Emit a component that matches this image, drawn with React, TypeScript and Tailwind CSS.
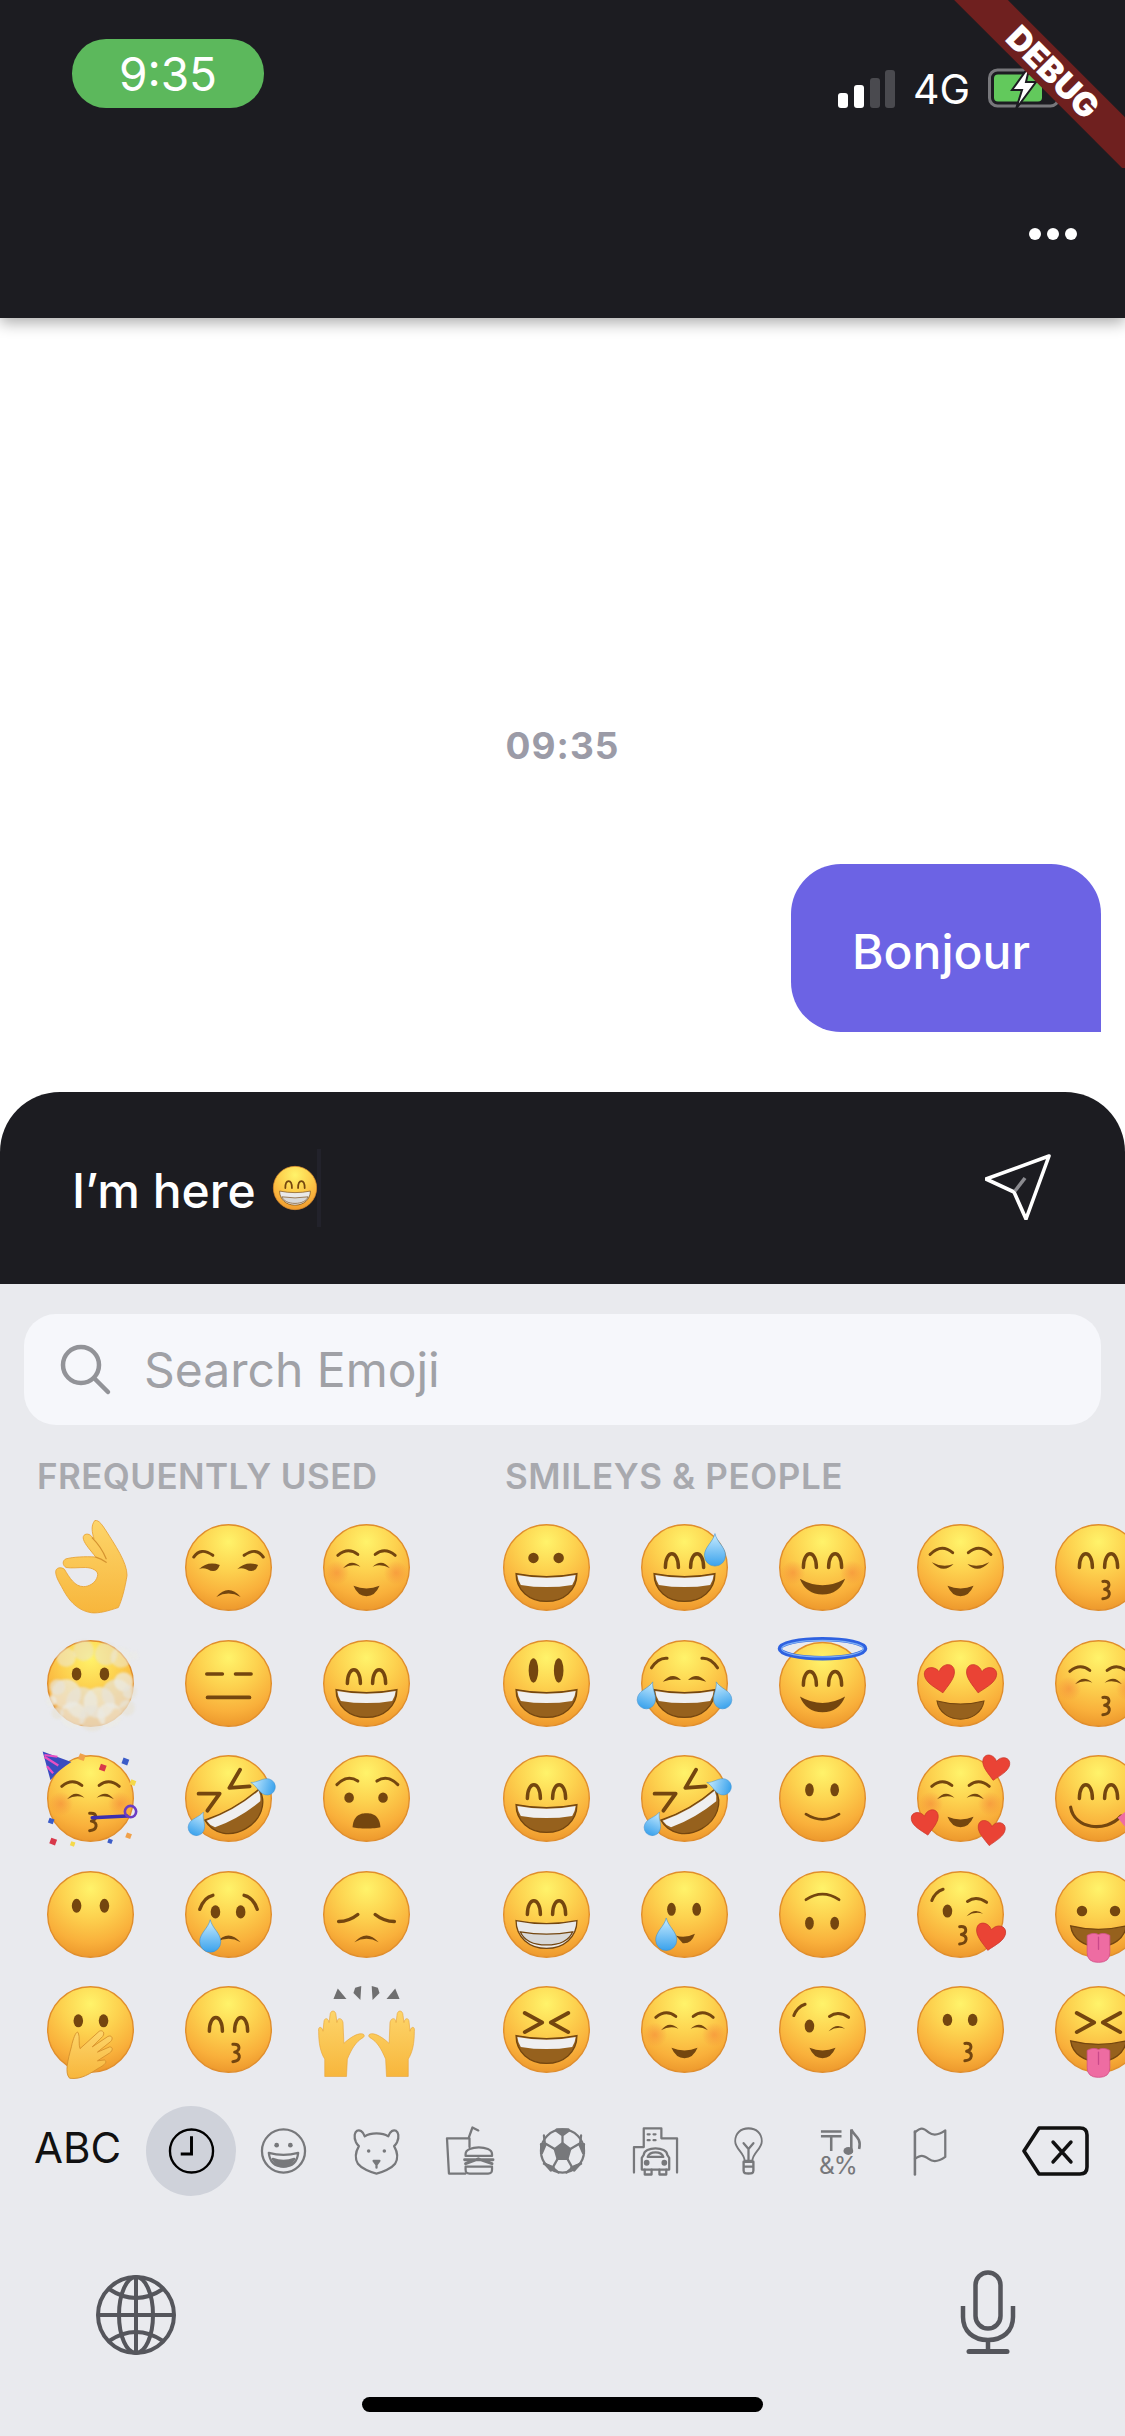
import React from "react";

const BR = "#74460f";
type P = { children?: React.ReactNode };

const Svg = ({ children }: P) => (
  <svg viewBox="0 0 100 100" className="w-[87px] h-[87px] overflow-visible">{children}</svg>
);
const F = ({ children }: P) => (
  <Svg>
    <circle cx="50" cy="50" r="49.2" fill="url(#fg)" stroke="#e08e2c" strokeWidth="1.6" />
    {children}
  </Svg>
);
const L = ({ d, w = 3.4, c = BR }: { d: string; w?: number; c?: string }) => (
  <path d={d} fill="none" stroke={c} strokeWidth={w} strokeLinecap="round" strokeLinejoin="round" />
);
const Fill = ({ d, c = BR }: { d: string; c?: string }) => <path d={d} fill={c} />;
const Eye = ({ x, y = 39, rx = 6, ry = 6 }: { x: number; y?: number; rx?: number; ry?: number }) => (
  <ellipse cx={x} cy={y} rx={rx} ry={ry} fill={BR} />
);
const Dots = ({ y = 39, rx = 5.5, ry = 7, a = 35, b = 64 }: { y?: number; rx?: number; ry?: number; a?: number; b?: number }) => (
  <>
    <Eye x={a} y={y} rx={rx} ry={ry} />
    <Eye x={b} y={y} rx={rx} ry={ry} />
  </>
);
const Arch = ({ y = 0 }: { y?: number }) => (
  <>
    <L d={`M28 ${50 + y} C28 ${29 + y} 43 ${29 + y} 43 ${50 + y}`} w={4} />
    <L d={`M57 ${50 + y} C57 ${29 + y} 72 ${29 + y} 72 ${50 + y}`} w={4} />
  </>
);
const Grin = () => (
  <>
    <path d="M15 57 Q50 64 85 57 C85 76 70 89 50 89 C30 89 15 76 15 57Z" fill="#96611d" stroke={BR} strokeWidth="1.5" />
    <path d="M16.500 58.500 Q50 65 83.500 58.500 Q83 65 79.500 70 Q50 75 20.500 70 Q17 65 16.500 58.500Z" fill="#efeff0" />
  </>
);
const Beam = () => (
  <>
    <path d="M15 57 Q50 64 85 57 C85 76 70 89 50 89 C30 89 15 76 15 57Z" fill="#e9e9ea" stroke={BR} strokeWidth="1.5" />
    <path d="M20 70 Q50 75 80 70 C76 79 66 85 50 85 C34 85 24 79 20 70Z" fill="#d8d8d8" stroke={BR} strokeWidth="1.5" />
  </>
);
const Smile = () => <Fill d="M24 63 Q50 78 76 63 Q69 81 50 81 Q31 81 24 63Z" />;
const Small = () => <Fill d="M35 71 Q50 77 65 71 Q60 83 50 83 Q40 83 35 71Z" />;
const Kiss = ({ x = 0, y = 0 }: { x?: number; y?: number }) => (
  <L w={3.4} d={`M${51 + x} ${66 + y} C${60 + x} ${65 + y} ${60 + x} ${73 + y} ${53 + x} ${75 + y} C${61 + x} ${77 + y} ${60 + x} ${85 + y} ${51 + x} ${86 + y}`} />
);
const Blush = () => (
  <>
    <circle cx="16" cy="56" r="14" fill="url(#bl)" />
    <circle cx="84" cy="56" r="14" fill="url(#bl)" />
  </>
);
const Closed = () => (
  <>
    <L d="M17 36 Q29 26 40 35" />
    <L d="M60 35 Q71 26 83 36" />
    <Fill d="M23 51 Q32 39 43 49 Q33 45 23 51Z" />
    <Fill d="M57 49 Q68 39 77 51 Q67 45 57 49Z" />
  </>
);
const Chev = () => (
  <>
    <L w={4.4} d="M25 31 L45 42 L25 53" />
    <L w={4.4} d="M75 31 L55 42 L75 53" />
  </>
);
const Drop = ({ x, y, s = 1, r = 0 }: { x: number; y: number; s?: number; r?: number }) => (
  <path
    transform={`translate(${x} ${y}) rotate(${r}) scale(${s})`}
    d="M0 -20 C2 -11 11 -6 11 3 A11 11 0 0 1 -11 3 C-11 -6 -2 -11 0 -20Z"
    fill="url(#dr)"
    stroke="#3d8fd0"
    strokeWidth=".6"
  />
);
const Heart = ({ x, y, s = 1, r = 0 }: { x: number; y: number; s?: number; r?: number }) => (
  <path
    transform={`translate(${x} ${y}) rotate(${r}) scale(${s})`}
    d="M0 11 C-5 6 -12 1 -12 -5 C-12 -12 -3 -12 0 -6 C3 -12 12 -12 12 -5 C12 1 5 6 0 11Z"
    fill="#ea4335"
    stroke="#c9362a"
    strokeWidth=".6"
  />
);
const Tongue = () => (
  <>
    <path d="M18 63 Q50 71 82 63 C80 78 66 87 50 87 C34 87 20 78 18 63Z" fill="#96611d" stroke={BR} strokeWidth="1.5" />
    <path d="M37 74 Q44 70 50 73 Q56 70 63 74 L63 94 Q63 105 50 105 Q37 105 37 94Z" fill="#ee6ca2" stroke="#d4548a" strokeWidth="1" />
    <L d="M50 76 V90" w={1.5} c="#c9488a" />
  </>
);
const Frown = ({ y = 0 }: { y?: number }) => <Fill d={`M36 ${84 + y} Q50 ${68 + y} 64 ${84 + y} Q50 ${76 + y} 36 ${84 + y}Z`} />;
const WinkEyes = () => (
  <>
    <L d="M17 34 Q21 24 30 21" />
    <Eye x={35} y={46} rx={5.5} ry={7.5} />
    <L d="M58 35 Q68 28 80 36" />
    <Fill d="M57 52 Q66 42 76 49 Q66 46 57 52Z" />
  </>
);
const Rofl = () => (
  <F>
    <g transform="rotate(-30 50 50)">
      <path d="M14 58 Q50 65 86 58 C86 77 70 90 50 90 C30 90 14 77 14 58Z" fill="#96611d" stroke={BR} strokeWidth="1.5" />
      <path d="M15.500 59.500 Q50 66 84.500 59.500 Q84 66 80 71 Q50 76 20 71 Q16 66 15.500 59.500Z" fill="#efeff0" />
      <L w={4.4} d="M23 28 L44 40 L22 50" />
      <L w={4.4} d="M78 28 L57 40 L78 50" />
    </g>
    <Drop x={14} y={81} s={0.85} r={25} />
    <Drop x={92} y={36} s={0.85} r={-75} />
  </F>
);

const OkHand = () => (
  <Svg>
    <path
      d="M55 -4 C60 -5 64 2 68 8 C78 24 92 44 92 59 C90 72 86 88 82 96 C70 100 60 103 51 102 C38 100 28 92 20 78 C16 70 10 62 10 55 C10 50 16 49 20 52 C26 62 32 72 42 72 C48 72 56 68 58 60 C60 54 52 50 44 50 C36 50 28 51 22 50 C18 48 17 42 22 40 C30 38 44 37 56 38 C50 30 44 24 42 18 C40 12 46 10 50 13 L54 17 C52 10 50 2 55 -4Z"
      fill="url(#hd)"
      stroke="#e8a335"
      strokeWidth="1"
    />
    <L d="M52 16 C58 22 64 30 68 40" w={1.4} c="#d49330" />
    <L d="M56 38 C60 39 64 41 68 44" w={1.4} c="#d49330" />
  </Svg>
);

const Mist = () => {
  const puffs: [number, number, number][] = [
    [22, 62, 17], [40, 72, 18], [60, 72, 18], [80, 62, 17], [30, 86, 15], [52, 90, 15], [72, 86, 14], [12, 54, 9], [88, 48, 11],
    [68, 16, 13], [85, 20, 12], [42, 12, 12], [22, 20, 11], [95, 60, 8], [100, 18, 5], [92, 78, 9], [5, 70, 6], [12, 84, 7],
  ];
  return (
    <F>
      <Dots y={39} rx={5.5} ry={7.5} a={34} b={66} />
      <g style={{ filter: "blur(1.5px)" }}>
        {puffs.map(([x, y, r], i) => (
          <circle key={i} cx={x} cy={y} r={r} fill={i % 2 ? "#e8e3d8" : "#ecebe6"} opacity={y < 30 ? 0.5 : 0.72} />
        ))}
      </g>
    </F>
  );
};

const Party = () => (
  <F>
    <Closed />
    <Blush />
    <Kiss y={1} x={-2} />
    <path d="M-5 -4 L28 8 Q12 18 4 29Z" fill="#3b4cc0" />
    <path d="M-3 2 L13 12 M0 13 L7 21" stroke="#ea4fc1" strokeWidth="2.6" fill="none" />
    <path d="M-3 0 L12 2" stroke="#ea4fc1" strokeWidth="2.4" />
    <path d="M52 72 L92 70" stroke="#3b2fb0" strokeWidth="4" strokeLinecap="round" />
    <circle cx="96" cy="65" r="6.500" fill="none" stroke="#6a3cc4" strokeWidth="3" />
    {[
      ["#f0a14a", 38, -2, 7], ["#d8384a", 62, 10, 7], ["#3b5cc8", 88, 3, 7], ["#f5d94a", 97, 28, 6], ["#3b5cc8", 3, 72, 6],
      ["#d8384a", 5, 95, 7], ["#f5d94a", 28, 99, 5], ["#3b5cc8", 71, 96, 5], ["#f0a14a", 92, 89, 6],
    ].map(([c, x, y, s], i) => (
      <rect key={i} x={x as number} y={y as number} width={s as number} height={s as number} fill={c as string} transform={`rotate(20 ${x} ${y})`} />
    ))}
  </F>
);

const HandOver = () => (
  <F>
    <Dots y={40} a={36} b={65} rx={5.5} ry={7.5} />
    <path
      d="M26 106 C20 100 24 85 28 70 C30 60 34 50 36 54 C38 58 36 68 38 72 L60 52 C64 50 67 54 64 58 L52 70 L70 58 C74 56 77 60 73 64 L58 76 L72 70 C76 70 76 74 72 77 L58 86 L66 85 C70 87 66 91 60 94 C50 100 40 108 26 106Z"
      fill="url(#hd)"
      stroke="#d48f2c"
      strokeWidth="1"
    />
  </F>
);

const RaisedHand = ({ flip }: { flip?: boolean }) => (
  <g transform={flip ? "translate(100 0) scale(-1 1)" : undefined} stroke="#e8a335" strokeWidth=".7">
    <path
      d="M2 104 V84 C-3 76 -5 66 -5 52 C-6 46 -1 46 0 52 L1 42 C1 36 6 36 7 42 L8 34 C8 27 15 27 15 34 L16 42 C16 36 22 36 23 42 L24 66 C28 62 36 56 42 55 C48 54 49 58 45 60 C38 64 33 72 28 84 L27 104Z"
      fill="url(#hd)"
    />
  </g>
);
const Hands = () => (
  <Svg>
    <RaisedHand />
    <RaisedHand flip />
    <g fill="#6f6f70" stroke="none">
      <path d="M17 3 L27 15 L12 15Z" />
      <path d="M37 2 L44 0 L43 16 L35 8Z" />
      <path d="M63 2 L56 0 L57 16 L65 8Z" />
      <path d="M83 3 L73 15 L88 15Z" />
    </g>
  </Svg>
);

const freq: React.ReactNode[] = [
  <OkHand />,
  <F>
    <L d="M10 38 Q18 26 32 36" />
    <L d="M68 36 Q82 26 90 38" />
    <Fill d="M16 52 Q26 42 40 47 Q36 58 26 52 Q20 50 16 52Z" />
    <Fill d="M60 52 Q70 42 84 47 Q80 58 70 52 Q64 50 60 52Z" />
    <Frown />
  </F>,
  <F>
    <Closed />
    <Blush />
    <Small />
  </F>,
  <Mist />,
  <F>
    <L w={4} d="M25 39 H43" />
    <L w={4} d="M58 39 H76" />
    <L w={4.4} d="M26 66 H74" />
  </F>,
  <F>
    <Arch />
    <Grin />
  </F>,
  <Party />,
  <Rofl />,
  <F>
    <L d="M16 34 Q28 22 40 30" />
    <L d="M62 30 Q74 22 86 34" />
    <Dots y={49} rx={5.5} ry={6} a={30} b={69} />
    <Fill d="M34 83 C35 68 45 67 50 67 C55 67 65 68 66 83 C60 85 40 85 34 83Z" />
  </F>,
  <F>
    <Dots a={34} b={66} y={40} rx={5.5} ry={8} />
  </F>,
  <F>
    <L w={4} d="M17 44 Q22 30 32 28" />
    <L w={4} d="M68 28 Q78 30 83 44" />
    <Dots a={35} b={64} y={47} rx={5.5} ry={7.5} />
    <Frown y={-2} />
    <Drop x={29} y={78} s={1.1} />
  </F>,
  <F>
    <L w={4} d="M18 58 Q30 58 40 50" />
    <L w={4} d="M60 50 Q70 58 82 58" />
    <Frown y={-2} />
  </F>,
  <HandOver />,
  <F>
    <Arch y={2} />
    <Kiss x={4} y={1} />
  </F>,
  <Hands />,
];

const smileys: React.ReactNode[] = [
  <F>
    <Eye x={35} y={39} />
    <Eye x={64} y={39} />
    <Grin />
  </F>,
  <F>
    <Arch />
    <Grin />
    <Drop x={85} y={33} s={1.1} />
  </F>,
  <F>
    <Arch />
    <Blush />
    <Smile />
  </F>,
  <F>
    <L d="M15 35 Q28 22 41 33" />
    <L d="M59 33 Q72 22 85 35" />
    <Fill d="M17 44 Q30 58 42 46 Q30 51 17 44Z" />
    <Fill d="M58 46 Q70 58 83 44 Q70 51 58 46Z" />
    <Small />
  </F>,
  <F>
    <Arch />
    <Kiss x={4} />
  </F>,
  <F>
    <Dots y={35} rx={5.5} ry={14} />
    <Grin />
  </F>,
  <F>
    <L w={3.4} d="M12 32 Q20 20 30 21" />
    <L w={3.4} d="M70 21 Q80 20 88 32" />
    <Fill d="M25 48 Q36 36 46 46 Q36 44 25 48Z" />
    <Fill d="M54 46 Q64 36 75 48 Q64 44 54 46Z" />
    <Grin />
    <Drop x={7} y={66} s={0.95} r={20} />
    <Drop x={93} y={66} s={0.95} r={-20} />
  </F>,
  <Svg>
    <g transform="translate(0 2)">
      <circle cx="50" cy="50" r="49.2" fill="url(#fg)" stroke="#e08e2c" strokeWidth="1.6" />
      <Arch />
      <Smile />
    </g>
    <ellipse cx="50" cy="10" rx="49" ry="11" fill="none" stroke="#2f62e0" strokeWidth="5" />
    <ellipse cx="50" cy="10" rx="47" ry="9.500" fill="none" stroke="#7fb0f5" strokeWidth="1.4" />
  </Svg>,
  <F>
    <Heart x={27} y={45} s={1.45} r={-10} />
    <Heart x={73} y={45} s={1.45} r={10} />
    <path d="M23 70 Q50 77 77 70 C75 84 62 91 50 91 C38 91 25 84 23 70Z" fill="#96611d" stroke={BR} strokeWidth="1.2" />
  </F>,
  <F>
    <Closed />
    <Blush />
    <Kiss x={4} />
  </F>,
  <F>
    <Arch />
    <Grin />
  </F>,
  <Rofl />,
  <F>
    <Dots y={40} rx={5} ry={7.5} />
    <L w={3.2} d="M31 68 Q50 80 69 68" />
  </F>,
  <F>
    <Closed />
    <Blush />
    <Small />
    <Heart x={90} y={15} s={1.3} r={10} />
    <Heart x={10} y={78} s={1.3} r={-10} />
    <Heart x={85} y={90} s={1.3} r={8} />
  </F>,
  <F>
    <Arch />
    <L w={3.6} d="M18 60 C22 85 58 90 76 70" />
    <path d="M72 72 L88 60 L96 74 Q90 88 80 82Z" fill="#ee6ca2" />
  </F>,
  <F>
    <Arch />
    <Beam />
  </F>,
  <F>
    <Eye x={35} y={44} rx={5} ry={7.5} />
    <Eye x={64} y={44} rx={5} ry={7.5} />
    <Fill d="M40 74 Q50 78 62 72 Q58 84 48 83Z" />
    <Drop x={29} y={76} s={1.1} />
  </F>,
  <F>
    <Dots y={60} rx={5} ry={7.500} />
    <L w={3.2} d="M31 33 Q50 20 69 33" />
  </F>,
  <F>
    <WinkEyes />
    <Kiss x={-2} y={-2} />
    <Heart x={84} y={76} s={1.4} r={10} />
  </F>,
  <F>
    <Eye x={31} y={46} />
    <Eye x={69} y={46} />
    <Tongue />
  </F>,
  <F>
    <Chev />
    <Grin />
  </F>,
  <F>
    <Closed />
    <Blush />
    <Small />
  </F>,
  <F>
    <WinkEyes />
    <Small />
  </F>,
  <F>
    <Dots y={39} rx={5.5} ry={7} />
    <Kiss x={4} />
  </F>,
  <F>
    <Chev />
    <Tongue />
  </F>,
];

const Cell = ({ children }: P) => <div className="w-[138px] h-[115.5px] flex items-center justify-center shrink-0">{children}</div>;

const TabIcon = ({ children, active }: { children: React.ReactNode; active?: boolean }) => (
  <svg
    viewBox="0 0 48 48"
    className="w-[47px] h-[48px] overflow-visible"
    fill="none"
    stroke={active ? "#000" : "#77787b"}
    strokeWidth="2.300"
    strokeLinecap="round"
    strokeLinejoin="round"
  >
    {children}
  </svg>
);
const tabSlot = "w-[93px] flex justify-center shrink-0";

export default function App() {
  return (
    <div className="relative w-[1125px] h-[2436px] overflow-hidden bg-white flex flex-col font-['Inter','Liberation_Sans',sans-serif]">
      <svg className="absolute w-0 h-0">
        <defs>
          <radialGradient id="fg" cx="50%" cy="20%" r="84%">
            <stop offset="0" stopColor="#fff36a" />
            <stop offset=".4" stopColor="#fdd24f" />
            <stop offset=".75" stopColor="#f9b03b" />
            <stop offset="1" stopColor="#ea9329" />
          </radialGradient>
          <radialGradient id="bl">
            <stop offset="0" stopColor="#f58a3a" stopOpacity=".6" />
            <stop offset="1" stopColor="#f58a3a" stopOpacity="0" />
          </radialGradient>
          <linearGradient id="dr" x1="0" y1="0" x2="0" y2="1">
            <stop offset="0" stopColor="#c9ecff" />
            <stop offset="1" stopColor="#3aa2ec" />
          </linearGradient>
          <linearGradient id="hd" x1="0" y1="0" x2="0" y2="1">
            <stop offset="0" stopColor="#fdd56a" />
            <stop offset="1" stopColor="#f7b63c" />
          </linearGradient>
        </defs>
      </svg>

      {/* App bar */}
      <div className="relative z-10 h-[318px] shrink-0 bg-[#1c1c21] shadow-[0_5px_14px_rgba(0,0,0,0.32)] overflow-hidden">
        <div className="flex items-start justify-between pt-[39px] pl-[72px] pr-[65px]">
          <div className="w-[192px] h-[69px] rounded-[34px] bg-[#5cb85c] flex items-center justify-center text-white text-[46px] leading-none">
            9:35
          </div>
          <div className="flex items-end h-[69px] -mb-px">
            <svg width="58" height="38" viewBox="0 0 58 38">
              <rect x="0" y="23" width="10" height="15" rx="3" fill="#fff" />
              <rect x="16" y="15" width="10" height="23" rx="3" fill="#fff" />
              <rect x="32" y="8" width="10" height="30" rx="3" fill="#4a4a4f" />
              <rect x="47" y="0" width="10" height="38" rx="3" fill="#4a4a4f" />
            </svg>
            <span className="ml-[17px] mr-[18px] text-white text-[41px] leading-[38px] h-[38px]">4G</span>
            <svg width="72" height="42" viewBox="0 0 72 42" className="overflow-visible">
              <rect x="1.500" y="4" width="69" height="36" rx="8" fill="none" stroke="#77777b" strokeWidth="3" />
              <rect x="6" y="8.500" width="48" height="27" rx="4" fill="#62c95c" />
              <path d="M42 -1 L24 24 H34 L28 43 L48 16 H38 Z" fill="#fff" stroke="#1c1c21" strokeWidth="2" />
            </svg>
          </div>
        </div>
        <div className="flex justify-end gap-[6px] pr-[48px] mt-[120px]">
          <div className="w-[12px] h-[12px] rounded-full bg-white" />
          <div className="w-[12px] h-[12px] rounded-full bg-white" />
          <div className="w-[12px] h-[12px] rounded-full bg-white" />
        </div>
        <div className="absolute top-0 right-0 w-[171px] h-[168px] overflow-hidden">
          <div className="absolute left-[-51px] top-[53px] w-[300px] h-[38px] rotate-45 bg-[#6f201f] flex items-center justify-center text-white text-[33px] font-black leading-none">
            DEBUG
          </div>
        </div>
      </div>

      {/* Chat */}
      <div className="flex-1 flex flex-col">
        <div className="mt-[408px] text-center text-[37px] leading-[40px] font-bold tracking-[1px] text-[#9b9ba7]">09:35</div>
        <div className="flex justify-end pr-[24px] mt-[98px]">
          <div className="w-[310px] h-[168px] rounded-[50px] rounded-br-none bg-[#6c63e4] flex items-center justify-center pr-[10px] pt-[8px] text-white text-[48px] font-medium">
            Bonjour
          </div>
        </div>
      </div>

      {/* Input */}
      <div className="h-[192px] shrink-0 rounded-t-[60px] bg-[#1c1c21] flex items-start justify-between pl-[72px] pr-[74px]">
        <div className="flex items-center mt-[57px] h-[78px]">
          <span className="text-white text-[48px] font-medium leading-none pt-[5px]">I’m here</span>
          <svg viewBox="0 0 100 100" className="w-[44px] h-[44px] ml-[17px] overflow-visible">
            <circle cx="50" cy="50" r="49.2" fill="url(#fg)" stroke="#e08e2c" strokeWidth="1.6" />
            <Arch />
            <Beam />
          </svg>
          <div className="w-[4px] h-[78px] bg-[#22222b]" />
        </div>
        <svg width="66" height="66" viewBox="0 0 66 66" className="mt-[62px]" fill="none" stroke="#fff" strokeWidth="3.600" strokeLinejoin="round">
          <path d="M64 2 L1 25 L29 38 L41 65 Z" />
          <path d="M30 37 L40 24" stroke="#8b8b90" />
        </svg>
      </div>

      {/* Keyboard */}
      <div className="h-[1152px] shrink-0 bg-[#e9eaee] flex flex-col">
        <div className="mt-[30px] mx-[24px] h-[111px] rounded-[32px] bg-[#f6f7fb] flex items-center pl-[36px]">
          <svg width="52" height="52" viewBox="0 0 52 52" fill="none" stroke="#929398" strokeWidth="4.500" strokeLinecap="round">
            <circle cx="21" cy="21" r="18" />
            <path d="M34 34 L48 48" />
          </svg>
          <span className="ml-[32px] text-[48px] leading-none text-[#a0a1a6]">Search Emoji</span>
        </div>

        <div className="flex overflow-hidden mt-[31px] pl-[21px]">
          <div className="shrink-0">
            <div className="pl-[16px] h-[40px] flex items-center text-[35px] font-semibold tracking-[0.4px] text-[#a8a9ae] whitespace-nowrap">FREQUENTLY USED</div>
            <div className="grid grid-cols-[repeat(3,138px)] mt-[14px]">
              {freq.map((e, i) => (
                <Cell key={i}>{e}</Cell>
              ))}
            </div>
          </div>
          <div className="shrink-0 ml-[42px]">
            <div className="pl-[28px] h-[40px] flex items-center text-[35px] font-semibold tracking-[0.6px] text-[#a8a9ae] whitespace-nowrap">SMILEYS &amp; PEOPLE</div>
            <div className="grid grid-cols-[repeat(5,138px)] mt-[14px]">
              {smileys.map((e, i) => (
                <Cell key={i}>{e}</Cell>
              ))}
            </div>
          </div>
        </div>

        {/* Category bar */}
        <div className="flex items-center h-[90px] mt-[18px] pl-[34px] pr-[36px]">
          <span className="w-[112px] shrink-0 text-[42px] leading-none text-[#111] -mt-[6px]">ABC</span>
          <div className="w-[90px] h-[90px] rounded-full bg-[#cfd2da] flex items-center justify-center shrink-0">
            <TabIcon active>
              <circle cx="24" cy="24" r="22" strokeWidth="2.400" />
              <path d="M24 9 V27 H13" strokeWidth="3" strokeLinecap="butt" strokeLinejoin="miter" />
            </TabIcon>
          </div>
          <div className={`${tabSlot} ml-[1px]`}>
            <TabIcon>
              <circle cx="24" cy="24" r="22" />
              <circle cx="17" cy="18" r="2.400" fill="#77787b" stroke="none" />
              <circle cx="31" cy="18" r="2.400" fill="#77787b" stroke="none" />
              <path d="M9 26 Q24 30 39 26 C38 36 32 40 24 40 C16 40 10 36 9 26Z" />
              <path d="M13 32 Q24 36 35 32 Q30 40 24 40 Q18 40 13 32Z" fill="#77787b" />
            </TabIcon>
          </div>
          <div className={tabSlot}>
            <TabIcon>
              <path d="M12 9 C8 -2 -2 3 3 15 C4 17 5 18 6 19 C2 26 2 32 5 37 C9 42 18 46 24 47 C30 46 39 42 43 37 C46 32 46 26 42 19 C43 18 44 17 45 15 C50 3 40 -2 36 9 C30 5 18 5 12 9Z" />
              <circle cx="16" cy="24" r="1.800" fill="#77787b" stroke="none" />
              <circle cx="32" cy="24" r="1.800" fill="#77787b" stroke="none" />
              <path d="M21 34 H27 L24 38Z M24 38 V41" fill="#77787b" />
            </TabIcon>
          </div>
          <div className={tabSlot}>
            <TabIcon>
              <path d="M1 11 H24 V20 M1 11 L3 47 H20 M23 11 L27 0 L33 3" />
              <path d="M20 27 C20 18 47 18 47 27 V29 H20Z M20 40 H47 V43 C47 47 45 47 43 47 H24 C22 47 20 47 20 43Z" />
              <path d="M19 33 H48 M20 37 L33 32 L47 37" strokeWidth="3" />
            </TabIcon>
          </div>
          <div className={tabSlot}>
            <TabIcon>
              <circle cx="24" cy="24" r="22" />
              <path d="M24 16 L32 22 L29 32 H19 L16 22Z" fill="#77787b" />
              <path d="M17 3 L24 8 L31 3 L24 8 V16 M16 22 L6 16 L5 8 M6 16 L2 26 M32 22 L42 16 L43 8 M42 16 L46 26 M19 32 L14 41 L5 37 M14 41 L20 46 M29 32 L34 41 L43 37 M34 41 L28 46" />
              <path d="M18 2 L30 2 L24 7Z M3 26 L7 17 L2 17Z M45 26 L41 17 L46 17Z M15 41 L6 37 L12 44Z M33 41 L42 37 L36 44Z" fill="#77787b" />
            </TabIcon>
          </div>
          <div className={tabSlot}>
            <TabIcon>
              <path d="M12 20 V1 H30 V11 M30 11 H46 V46 M2 46 V20 H12" />
              <path d="M16 7 H18 M22 7 H24 M16 13 H18 M22 13 H24" />
              <path d="M12 28 C12 19 36 19 36 28 L38 31 V43 H10 V31Z" />
              <path d="M16 30 C18 24 30 24 32 30Z" />
              <path d="M13 43 V48 H20 V43 M28 43 V48 H35 V43" />
              <circle cx="15" cy="36" r="1.800" fill="#77787b" />
              <circle cx="33" cy="36" r="1.800" fill="#77787b" />
            </TabIcon>
          </div>
          <div className={tabSlot}>
            <TabIcon>
              <path d="M19 34 C19 26 7 22 7 14 C7 6 14 1 24 1 C34 1 41 6 41 14 C41 22 29 26 29 34Z" transform="translate(4.800 0) scale(0.8 1)" />
              <path d="M24 34 V22 M19 16 L24 22 L29 16" />
              <path d="M19 35 H29 V44 C29 47 27 47 24 47 C21 47 19 47 19 44Z M19 40 H29" strokeWidth="2.400" />
            </TabIcon>
          </div>
          <div className={tabSlot}>
            <svg viewBox="0 0 48 48" className="w-[47px] h-[48px] overflow-visible" fill="none" stroke="#77787b" strokeWidth="2.600">
              <path d="M3 4 H24 M3 9 H24 M13.500 9 V24" />
              <path d="M34 26 V2 C36 8 45 10 42 22" />
              <ellipse cx="31" cy="24" rx="5" ry="4" fill="#77787b" stroke="none" />
              <text x="1" y="47" fontSize="25" fill="#77787b" stroke="none" letterSpacing="-1" fontFamily="Inter, sans-serif">&amp;%</text>
            </svg>
          </div>
          <div className={tabSlot}>
            <TabIcon>
              <path d="M4 48 V4" strokeWidth="2.600" />
              <path d="M4 5 C10 0 12 0 18 5 C23 9 28 8 35 3 V30 C28 35 23 36 18 32 C12 28 10 28 4 32" />
            </TabIcon>
          </div>
          <svg viewBox="0 0 67 50" className="w-[67px] h-[50px] ml-auto shrink-0" fill="none" stroke="#111" strokeWidth="3.600" strokeLinejoin="round">
            <path d="M17 2 H58 Q65 2 65 9 V41 Q65 48 58 48 H17 L2 25Z" />
            <path d="M31 16 L49 36 M49 16 L31 36" strokeWidth="3.400" strokeLinecap="round" />
          </svg>
        </div>

        {/* Bottom */}
        <div className="flex items-center justify-between pl-[96px] pr-[109px] mt-[77px] h-[84px]">
          <svg viewBox="0 0 80 80" className="w-[80px] h-[80px] shrink-0" fill="none" stroke="#55565c" strokeWidth="4">
            <circle cx="40" cy="40" r="38" />
            <ellipse cx="40" cy="40" rx="17" ry="38" />
            <path d="M40 2 V78 M2 40 H78" />
            <path d="M13 14 Q40 32 67 14 M13 66 Q40 48 67 66" />
          </svg>
          <svg viewBox="0 0 56 84" className="w-[56px] h-[84px] shrink-0 -mt-[5px]" fill="none" stroke="#55565c" strokeWidth="4.500">
            <rect x="15.500" y="2.500" width="25" height="56" rx="12.500" />
            <path d="M3 36 V47 C3 61 13 70 28 70 C43 70 53 61 53 47 V36" />
            <path d="M28 70 V81" />
            <path d="M9 81.500 H47" strokeWidth="5" strokeLinecap="round" />
          </svg>
        </div>
        <div className="mt-[40px] mx-auto w-[401px] h-[15px] rounded-full bg-black" />
      </div>
    </div>
  );
}
